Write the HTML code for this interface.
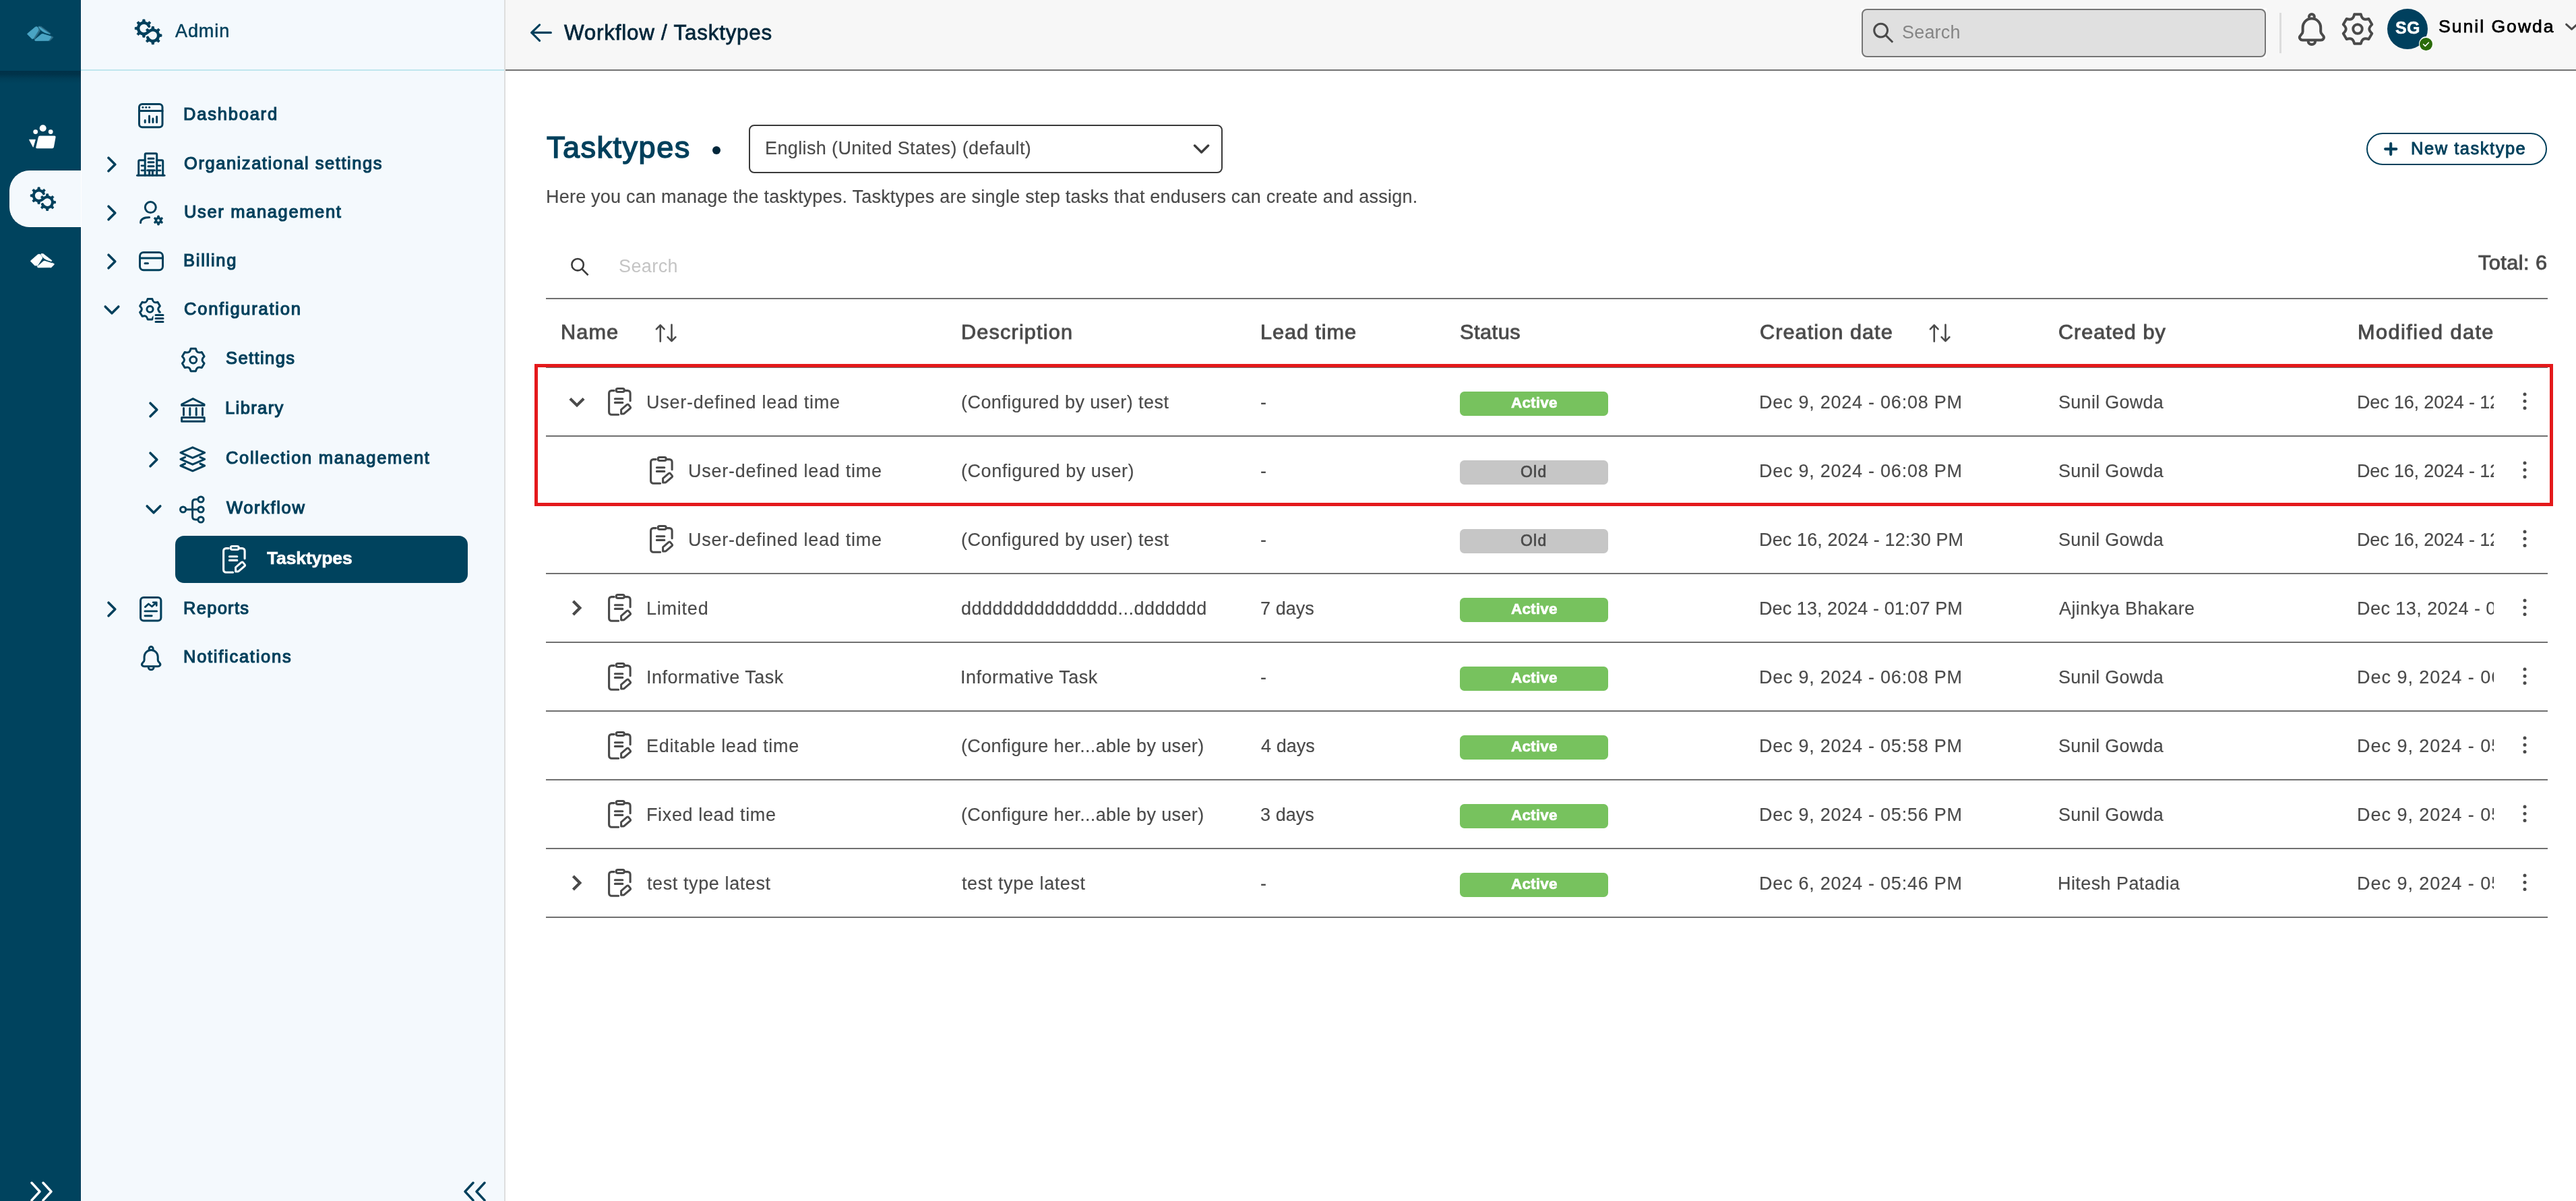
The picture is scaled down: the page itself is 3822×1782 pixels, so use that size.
<!DOCTYPE html>
<html lang="en"><head><meta charset="utf-8"><title>Workflow / Tasktypes</title>
<style>
html,body{margin:0;padding:0;width:3822px;height:1782px;overflow:hidden}
body{width:3822px;height:1782px;overflow:hidden;background:#fff;font-family:"Liberation Sans",sans-serif;color:#4a4a4a;position:relative}
div,span,svg,a,h1,p,b,i,nav,aside,header,main,section,button{position:absolute;box-sizing:border-box;margin:0;padding:0}
aside,header,main,nav,section{position:static}
.t{white-space:pre;line-height:0;font-weight:400;will-change:transform}
.i{overflow:visible}
.ln{background:#707070;height:2px}
</style></head>
<body>
<aside>
<div style="left:0px;top:0px;width:120px;height:1782px;background:#00435e;border-right:1px solid #003a5a"></div>
<div style="left:0px;top:105px;width:120px;height:19px;background:linear-gradient(to bottom,rgba(0,18,32,.36) 0%,rgba(0,18,32,.32) 28%,rgba(0,18,32,.11) 58%,rgba(0,18,32,0) 100%)"></div>
<div style="left:14px;top:253px;width:108px;height:84px;background:#f4f9fd;border-radius:30px 0 0 30px;border:1px solid #fff;border-right:none"></div>
<svg class="i" style="left:40.0px;top:38.0px" width="42" height="26" viewBox="0 0 42 26" ><path d="M15.40 1.70L18.60 5.30L19.50 7.80L11.60 19.80L9.60 19.40L17.00 7.00L16.50 3.80Z" fill="#306d87" stroke="#306d87" stroke-width="0.8" stroke-linejoin="round"/><path d="M17.60 1.10L21.00 1.20L35.20 11.70L34.40 12.60L19.60 2.60Z" fill="#306d87" stroke="#306d87" stroke-width="0.8" stroke-linejoin="round"/><path d="M35.30 15.40L38.80 16.90L38.60 18.00L33.70 22.70L32.00 22.30L36.10 17.00Z" fill="#306d87" stroke="#306d87" stroke-width="0.8" stroke-linejoin="round"/><path d="M0.60 12.00L12.50 2.10L14.90 1.80L16.50 3.80L17.00 7.00L9.60 19.00L7.60 19.70L0.60 12.80Z" fill="#4aa4c4" stroke="#4aa4c4" stroke-width="0.8" stroke-linejoin="round"/><path d="M17.30 1.70L19.60 2.60L34.20 12.60Q25.50 11.00 21.80 7.60Q18.80 4.80 17.30 1.70Z" fill="#4aa4c4" stroke="#4aa4c4" stroke-width="0.8" stroke-linejoin="round"/><path d="M11.30 21.30L21.20 12.90L23.30 12.30L34.90 15.80L36.10 17.00L32.00 22.30L12.50 22.50Z" fill="#4aa4c4" stroke="#4aa4c4" stroke-width="0.8" stroke-linejoin="round"/></svg>
<svg class="i" style="left:43.0px;top:185.0px" width="41" height="36" viewBox="0 0 41 36" ><circle cx="20.7" cy="5.2" r="5" fill="#fff"/><circle cx="9.7" cy="10.6" r="3.4" fill="#fff"/><circle cx="32.2" cy="10.6" r="3.4" fill="#fff"/><path d="M10.3 33.6L13.8 18.6Q14.3 16.6 16.3 16.6H37.6Q39.9 16.6 39.5 18.9L36.9 33.3Q36.5 35.3 34.4 35.3H11.8Q9.8 35.3 10.3 33.6Z" fill="#fff"/><path d="M0.4 22.2H9.4L6.2 33.2Z" fill="#fff" stroke="#fff" stroke-width="0.8" stroke-linejoin="round"/></svg>
<svg class="i" style="left:45.3px;top:276.5px" width="39.6" height="39.6" viewBox="0 0 39.6 39.6" ><g transform="scale(0.940)"><path d="M21.10 10.99A8.3 8.3 0 1 0 19.27 19.97L20.93 18.73A8.3 8.3 0 1 1 19.10 27.71" fill="none" stroke="#00405c" stroke-width="4.3" stroke-linecap="round" stroke-linejoin="round"/><path d="M18.77 5.90L21.64 3.74L23.76 5.86L21.60 8.73ZM11.40 4.50L11.90 0.95L14.90 0.95L15.40 4.50ZM5.20 8.73L3.04 5.86L5.16 3.74L8.03 5.90ZM3.80 16.10L0.25 15.60L0.25 12.60L3.80 12.10ZM8.03 22.30L5.16 24.46L3.04 22.34L5.20 19.47ZM15.40 23.70L14.90 27.25L11.90 27.25L11.40 23.70ZM18.60 19.23L16.44 16.36L18.56 14.24L21.43 16.40ZM24.80 15.00L25.30 11.45L28.30 11.45L28.80 15.00ZM32.17 16.40L35.04 14.24L37.16 16.36L35.00 19.23ZM36.40 22.60L39.95 23.10L39.95 26.10L36.40 26.60ZM35.00 29.97L37.16 32.84L35.04 34.96L32.17 32.80ZM28.80 34.20L28.30 37.75L25.30 37.75L24.80 34.20ZM21.43 32.80L18.56 34.96L16.44 32.84L18.60 29.97Z" fill="#00405c" stroke="#00405c" stroke-width="0.9" stroke-linejoin="round"/></g></svg>
<svg class="i" style="left:45.0px;top:376.0px" width="38" height="24" viewBox="0 0 38 24" ><path d="M0.55 10.92L11.38 1.52L13.56 1.23L15.02 3.13L15.47 6.17L8.74 17.57L6.92 18.24L0.55 11.68Z" fill="#fff" stroke="#fff" stroke-width="0.8" stroke-linejoin="round"/><path d="M15.74 1.14L17.84 2.00L31.12 11.50Q23.21 9.97 19.84 6.75Q17.11 4.08 15.74 1.14Z" fill="#fff" stroke="#fff" stroke-width="0.8" stroke-linejoin="round"/><path d="M10.28 19.76L19.29 11.78L21.20 11.21L31.76 14.53L32.85 15.67L29.12 20.71L11.38 20.90Z" fill="#fff" stroke="#fff" stroke-width="0.8" stroke-linejoin="round"/><path d="M14.01 1.14L16.93 4.56L17.75 6.93L10.56 18.33L8.74 17.95L15.47 6.17L15.02 3.13Z" fill="#fff" stroke="#fff" stroke-width="0.8" stroke-linejoin="round"/><path d="M16.02 0.57L19.11 0.67L32.03 10.64L31.30 11.50L17.84 2.00Z" fill="#fff" stroke="#fff" stroke-width="0.8" stroke-linejoin="round"/><path d="M32.12 14.15L35.31 15.58L35.13 16.62L30.67 21.09L29.12 20.71L32.85 15.67Z" fill="#fff" stroke="#fff" stroke-width="0.8" stroke-linejoin="round"/></svg>
<svg class="i" style="left:45.0px;top:1753.0px" width="33" height="29" viewBox="0 0 33 29" ><path d="M2 2L14 15L2 28M19 2L31 15L19 28" fill="none" stroke="#fff" stroke-width="3.4" stroke-linecap="round" stroke-linejoin="round" /></svg>
</aside>
<nav>
<div style="left:120px;top:0px;width:628px;height:1782px;background:#f4f9fd;border-left:1px solid #fff"></div>
<div style="left:748px;top:0px;width:2px;height:1782px;background:#dedede"></div>
<div style="left:120px;top:103px;width:628px;height:2px;background:#bfe6ee"></div>
<svg class="i" style="left:200.0px;top:27.5px" width="42" height="42" viewBox="0 0 42 42" ><g transform="scale(1.000)"><path d="M21.10 10.99A8.3 8.3 0 1 0 19.27 19.97L20.93 18.73A8.3 8.3 0 1 1 19.10 27.71" fill="none" stroke="#00405c" stroke-width="4.3" stroke-linecap="round" stroke-linejoin="round"/><path d="M18.77 5.90L21.64 3.74L23.76 5.86L21.60 8.73ZM11.40 4.50L11.90 0.95L14.90 0.95L15.40 4.50ZM5.20 8.73L3.04 5.86L5.16 3.74L8.03 5.90ZM3.80 16.10L0.25 15.60L0.25 12.60L3.80 12.10ZM8.03 22.30L5.16 24.46L3.04 22.34L5.20 19.47ZM15.40 23.70L14.90 27.25L11.90 27.25L11.40 23.70ZM18.60 19.23L16.44 16.36L18.56 14.24L21.43 16.40ZM24.80 15.00L25.30 11.45L28.30 11.45L28.80 15.00ZM32.17 16.40L35.04 14.24L37.16 16.36L35.00 19.23ZM36.40 22.60L39.95 23.10L39.95 26.10L36.40 26.60ZM35.00 29.97L37.16 32.84L35.04 34.96L32.17 32.80ZM28.80 34.20L28.30 37.75L25.30 37.75L24.80 34.20ZM21.43 32.80L18.56 34.96L16.44 32.84L18.60 29.97Z" fill="#00405c" stroke="#00405c" stroke-width="0.9" stroke-linejoin="round"/></g></svg>
<span class="t" style="left:260.1px;top:46px;font-size:27px;color:#00405c;letter-spacing:0.92px;-webkit-text-stroke:0.5px;">Admin</span>
<svg class="i" style="left:205.2px;top:153.1px" width="38" height="38" viewBox="0 0 38 38" ><rect x="1.5" y="1.5" width="34.5" height="34.2" rx="4.5" fill="none" stroke="#00405c" stroke-width="3" stroke-linecap="round" stroke-linejoin="round" /><path d="M1.5 11.4H36" fill="none" stroke="#00405c" stroke-width="3" stroke-linecap="round" stroke-linejoin="round" /><circle cx="6.9" cy="6.3" r="1.5" fill="#00405c"/><circle cx="11.8" cy="6.3" r="1.5" fill="#00405c"/><circle cx="16.6" cy="6.3" r="1.5" fill="#00405c"/><path d="M10.2 25.6V28.4M16.5 19V28.4M21.9 23V28.4M27.6 20V28.4" fill="none" stroke="#00405c" stroke-width="3" stroke-linecap="round" stroke-linejoin="round" /></svg><span class="t" style="left:272.2px;top:169px;font-size:25.5px;color:#00405c;letter-spacing:1.79px;-webkit-text-stroke:1.15px;">Dashboard</span>
<svg class="i" style="left:159.0px;top:231.7px" width="14" height="24" viewBox="0 0 14 24" ><path d="M2 2.2L11.8 12L2 21.8" fill="none" stroke="#00405c" stroke-width="3.6" stroke-linecap="round" stroke-linejoin="round" /></svg><svg class="i" style="left:201.7px;top:224.9px" width="44" height="38" viewBox="0 0 44 38" ><path d="M1.5 35.3H42" fill="none" stroke="#00405c" stroke-width="3" stroke-linecap="round" stroke-linejoin="round" /><path d="M13.2 35V4.2Q13.2 2.7 14.7 2.7H29.2Q30.7 2.7 30.7 4.2V35" fill="none" stroke="#00405c" stroke-width="3" stroke-linecap="round" stroke-linejoin="round" /><path d="M3.7 35V14.2Q3.7 12.7 5.2 12.7H13 M30.9 12.7H38.2Q39.7 12.7 39.7 14.2V35" fill="none" stroke="#00405c" stroke-width="3" stroke-linecap="round" stroke-linejoin="round" /><path d="M18 10.3H26M18 15.8H26M18 21.7H26" fill="none" stroke="#00405c" stroke-width="3" stroke-linecap="round" stroke-linejoin="round" /><path d="M16.6 27.8H27.4M19.6 28V35M24.4 28V35" fill="none" stroke="#00405c" stroke-width="3" stroke-linecap="round" stroke-linejoin="round" /><path d="M8 20.8H11M8 27.8H11M33 20.8H36M33 27.8H36" fill="none" stroke="#00405c" stroke-width="2.8" stroke-linecap="round" stroke-linejoin="round" /></svg><span class="t" style="left:273.2px;top:242px;font-size:25.5px;color:#00405c;letter-spacing:1.55px;-webkit-text-stroke:1.15px;">Organizational settings</span>
<svg class="i" style="left:159.0px;top:303.7px" width="14" height="24" viewBox="0 0 14 24" ><path d="M2 2.2L11.8 12L2 21.8" fill="none" stroke="#00405c" stroke-width="3.6" stroke-linecap="round" stroke-linejoin="round" /></svg><svg class="i" style="left:207.0px;top:298.8px" width="36" height="36" viewBox="0 0 36 36" ><circle cx="16.3" cy="8.6" r="8" fill="none" stroke="#00405c" stroke-width="3" stroke-linecap="round" stroke-linejoin="round" /><path d="M1.6 31.4C1.6 25.6 6 23.4 14.6 23.4" fill="none" stroke="#00405c" stroke-width="3" stroke-linecap="round" stroke-linejoin="round" /><path d="M29.43 23.31L29.10 21.09L26.90 21.09L26.57 23.31L24.66 24.42L22.56 23.59L21.46 25.49L23.23 26.90L23.23 29.10L21.46 30.51L22.56 32.41L24.66 31.58L26.57 32.69L26.90 34.91L29.10 34.91L29.43 32.69L31.34 31.58L33.44 32.41L34.54 30.51L32.77 29.10L32.77 26.90L34.54 25.49L33.44 23.59L31.34 24.42ZM25.70 28.00a2.3 2.3 0 1 0 4.6 0a2.3 2.3 0 1 0 -4.6 0Z" fill="#00405c" fill-rule="evenodd" stroke="#00405c" stroke-width="1" stroke-linejoin="round"/></svg><span class="t" style="left:273.2px;top:314px;font-size:25.5px;color:#00405c;letter-spacing:1.65px;-webkit-text-stroke:1.15px;">User management</span>
<svg class="i" style="left:159.0px;top:375.7px" width="14" height="24" viewBox="0 0 14 24" ><path d="M2 2.2L11.8 12L2 21.8" fill="none" stroke="#00405c" stroke-width="3.6" stroke-linecap="round" stroke-linejoin="round" /></svg><svg class="i" style="left:205.5px;top:373.3px" width="37" height="30" viewBox="0 0 37 30" ><rect x="1.5" y="1.5" width="34" height="26.3" rx="5.5" fill="none" stroke="#00405c" stroke-width="3" stroke-linecap="round" stroke-linejoin="round" /><path d="M1.5 10H35.5" fill="none" stroke="#00405c" stroke-width="3" stroke-linecap="round" stroke-linejoin="round" /><path d="M9 17.7H13.5" fill="none" stroke="#00405c" stroke-width="3" stroke-linecap="round" stroke-linejoin="round" /></svg><span class="t" style="left:272.2px;top:386px;font-size:25.5px;color:#00405c;letter-spacing:1.73px;-webkit-text-stroke:1.15px;">Billing</span>
<svg class="i" style="left:154.0px;top:452.7px" width="24" height="14" viewBox="0 0 24 14" ><path d="M2.2 2L12 11.8L21.8 2" fill="none" stroke="#00405c" stroke-width="3.6" stroke-linecap="round" stroke-linejoin="round" /></svg><svg class="i" style="left:205.0px;top:439.5px" width="40" height="40" viewBox="0 0 40 40" ><path d="M14.12 3.52L20.88 3.52C22.07 8.49 24.10 9.66 29.00 8.21L32.38 14.06C28.67 17.58 28.67 19.92 32.38 23.44L29.00 29.29C24.10 27.84 22.07 29.01 20.88 33.98L14.12 33.98C12.93 29.01 10.90 27.84 6.00 29.29L2.62 23.44C6.33 19.92 6.33 17.58 2.62 14.06L6.00 8.21C10.90 9.66 12.93 8.49 14.12 3.52Z" fill="none" stroke="#00405c" stroke-width="3" stroke-linecap="round" stroke-linejoin="round" /><circle cx="17.5" cy="18.75" r="4.60" fill="none" stroke="#00405c" stroke-width="3" stroke-linecap="round" stroke-linejoin="round" /><rect x="22.5" y="24.5" width="20" height="16" fill="#f4f9fd"/><path d="M26 27.5H37M26 32.5H37M26 37.5H37" fill="none" stroke="#00405c" stroke-width="3" stroke-linecap="round" stroke-linejoin="round" /></svg><span class="t" style="left:273.2px;top:458px;font-size:25.5px;color:#00405c;letter-spacing:1.77px;-webkit-text-stroke:1.15px;">Configuration</span>
<svg class="i" style="left:265.5px;top:514.0px" width="40" height="40" viewBox="0 0 40 40" ><path d="M17.05 3.31L24.45 3.31C25.76 8.75 27.99 10.04 33.36 8.45L37.06 14.86C32.99 18.71 32.99 21.29 37.06 25.14L33.36 31.55C27.99 29.96 25.76 31.25 24.45 36.69L17.05 36.69C15.74 31.25 13.51 29.96 8.14 31.55L4.44 25.14C8.51 21.29 8.51 18.71 4.44 14.86L8.14 8.45C13.51 10.04 15.74 8.75 17.05 3.31Z" fill="none" stroke="#00405c" stroke-width="3" stroke-linecap="round" stroke-linejoin="round" /><circle cx="20.75" cy="20" r="5.00" fill="none" stroke="#00405c" stroke-width="3" stroke-linecap="round" stroke-linejoin="round" /></svg><span class="t" style="left:334.6px;top:531px;font-size:25.5px;color:#00405c;letter-spacing:1.41px;-webkit-text-stroke:1.15px;">Settings</span>
<svg class="i" style="left:221.0px;top:596.2px" width="14" height="24" viewBox="0 0 14 24" ><path d="M2 2.2L11.8 12L2 21.8" fill="none" stroke="#00405c" stroke-width="3.6" stroke-linecap="round" stroke-linejoin="round" /></svg><svg class="i" style="left:267.9px;top:589.6px" width="37" height="37" viewBox="0 0 37 37" ><path d="M18.3 1.6L1.6 10V11.6H35V10Z" fill="none" stroke="#00405c" stroke-width="3" stroke-linecap="round" stroke-linejoin="round" /><path d="M4.5 15.5V26M13.8 15.5V26M23.2 15.5V26M32.5 15.5V26" fill="none" stroke="#00405c" stroke-width="3" stroke-linecap="round" stroke-linejoin="round" /><rect x="1.6" y="29.6" width="33.6" height="5.6" fill="none" stroke="#00405c" stroke-width="3" stroke-linecap="round" stroke-linejoin="round" /></svg><span class="t" style="left:333.6px;top:605px;font-size:25.5px;color:#00405c;letter-spacing:1.39px;-webkit-text-stroke:1.15px;">Library</span>
<svg class="i" style="left:221.0px;top:670.2px" width="14" height="24" viewBox="0 0 14 24" ><path d="M2 2.2L11.8 12L2 21.8" fill="none" stroke="#00405c" stroke-width="3.6" stroke-linecap="round" stroke-linejoin="round" /></svg><svg class="i" style="left:265.9px;top:661.8px" width="40" height="39" viewBox="0 0 40 39" ><path d="M19.8 1.8L37.6 9.6L19.8 17.4L2 9.6Z" fill="none" stroke="#00405c" stroke-width="3.1" stroke-linecap="round" stroke-linejoin="round" /><path d="M8.6 16.4L2 19.4L19.8 27.2L37.6 19.4L31 16.4" fill="none" stroke="#00405c" stroke-width="3.1" stroke-linecap="round" stroke-linejoin="round" /><path d="M8.6 26L2 29L19.8 36.8L37.6 29L31 26" fill="none" stroke="#00405c" stroke-width="3.1" stroke-linecap="round" stroke-linejoin="round" /></svg><span class="t" style="left:334.6px;top:679px;font-size:25.5px;color:#00405c;letter-spacing:1.7px;-webkit-text-stroke:1.15px;">Collection management</span>
<svg class="i" style="left:216.0px;top:749.2px" width="24" height="14" viewBox="0 0 24 14" ><path d="M2.2 2L12 11.8L21.8 2" fill="none" stroke="#00405c" stroke-width="3.6" stroke-linecap="round" stroke-linejoin="round" /></svg><svg class="i" style="left:265.0px;top:734.0px" width="40" height="44" viewBox="0 0 40 44" ><circle cx="6.6" cy="22" r="4.1" fill="none" stroke="#00405c" stroke-width="3" stroke-linecap="round" stroke-linejoin="round" /><circle cx="33" cy="7" r="4.1" fill="none" stroke="#00405c" stroke-width="3" stroke-linecap="round" stroke-linejoin="round" /><circle cx="33" cy="22" r="4.1" fill="none" stroke="#00405c" stroke-width="3" stroke-linecap="round" stroke-linejoin="round" /><circle cx="33" cy="37" r="4.1" fill="none" stroke="#00405c" stroke-width="3" stroke-linecap="round" stroke-linejoin="round" /><path d="M10.8 22H28.8M28.8 7H25Q20.6 7 20.6 11.4V32.6Q20.6 37 25 37H28.8" fill="none" stroke="#00405c" stroke-width="3" stroke-linecap="round" stroke-linejoin="round" /></svg><span class="t" style="left:335.6px;top:753px;font-size:25.5px;color:#00405c;letter-spacing:1.64px;-webkit-text-stroke:1.15px;">Workflow</span>
<div style="left:260px;top:795px;width:434px;height:70px;background:#00435e;border-radius:13px"></div>
<svg class="i" style="left:329.8px;top:809.0px" width="36.0" height="43.0" viewBox="0 0 36.0 43.0" ><g transform="scale(1.0)"><path d="M25.8 4.6H29.3a3.8 3.8 0 0 1 3.8 3.8V19.8M9.2 4.6H5.4a3.8 3.8 0 0 0-3.8 3.8V36.4a3.8 3.8 0 0 0 3.8 3.8H15.6" fill="none" stroke="#fff" stroke-width="3.1" stroke-linecap="round" stroke-linejoin="round" /><rect x="12.2" y="1.55" width="12.1" height="4.9" rx="2.45" fill="none" stroke="#fff" stroke-width="3.1" stroke-linecap="round" stroke-linejoin="round" /><path d="M10.4 16.7H21.8M10.4 22.4H21.8" fill="none" stroke="#fff" stroke-width="3.1" stroke-linecap="round" stroke-linejoin="round" /><path d="M19.6 32.8L28.2 25.4Q29.5 24.4 30.6 25.6L33.1 28.6Q34.1 29.9 32.9 31L24.3 38.4Q23.7 38.9 22.9 38.9H19.6Z" fill="none" stroke="#fff" stroke-width="3" stroke-linecap="round" stroke-linejoin="round" /></g></svg>
<span class="t" style="left:396.4px;top:828px;font-size:26.5px;color:#fff;font-weight:700;letter-spacing:-0.13px;-webkit-text-stroke:0.6px;">Tasktypes</span>
<svg class="i" style="left:159.0px;top:891.7px" width="14" height="24" viewBox="0 0 14 24" ><path d="M2 2.2L11.8 12L2 21.8" fill="none" stroke="#00405c" stroke-width="3.6" stroke-linecap="round" stroke-linejoin="round" /></svg><svg class="i" style="left:207.2px;top:885.0px" width="34" height="38" viewBox="0 0 34 38" ><rect x="1.55" y="1.55" width="30.3" height="34.4" rx="4.5" fill="none" stroke="#00405c" stroke-width="3.1" stroke-linecap="round" stroke-linejoin="round" /><path d="M8.4 15.6L13.4 11L18.4 15L24.2 9.8" fill="none" stroke="#00405c" stroke-width="2.8" stroke-linecap="round" stroke-linejoin="round" /><path d="M20.2 8.8H25.2V13.6" fill="none" stroke="#00405c" stroke-width="2.8" stroke-linecap="round" stroke-linejoin="round" /><path d="M8 21.9H25.6M8 28.75H18.2" fill="none" stroke="#00405c" stroke-width="2.9" stroke-linecap="round" stroke-linejoin="round" /></svg><span class="t" style="left:272.2px;top:902px;font-size:25.5px;color:#00405c;letter-spacing:1.29px;-webkit-text-stroke:1.15px;">Reports</span>
<svg class="i" style="left:208.9px;top:958.0px" width="32" height="40" viewBox="0 0 32 40" ><g transform="translate(0,0.7)"><path d="M12.13 3.94A3.03 3.03 0 0 1 18.19 3.94M5.08 20.47V15.92A10.08 10.08 0 0 1 25.24 15.92V20.47Q25.24 22.44 27.29 24.26Q30.02 26.98 28.05 28.96Q27.29 30.02 25.47 30.02H4.85Q3.03 30.02 2.27 28.96Q0.30 26.98 3.03 24.26Q5.08 22.44 5.08 20.47ZM11.14 31.08A4.02 4.02 0 0 0 19.18 31.08" fill="none" stroke="#00405c" stroke-width="3" stroke-linecap="round" stroke-linejoin="round" /></g></svg><span class="t" style="left:272.2px;top:974px;font-size:25.5px;color:#00405c;letter-spacing:1.73px;-webkit-text-stroke:1.15px;">Notifications</span>
<svg class="i" style="left:688.0px;top:1753.0px" width="33" height="29" viewBox="0 0 33 29" ><path d="M14 2L2 15L14 28M31 2L19 15L31 28" fill="none" stroke="#00405c" stroke-width="3.4" stroke-linecap="round" stroke-linejoin="round" /></svg>
</nav>
<header>
<div style="left:750px;top:0px;width:3072px;height:102px;background:#f7f7f7"></div>
<div style="left:750px;top:103px;width:3072px;height:2px;background:#717171"></div>
<svg class="i" style="left:787.0px;top:36.0px" width="33" height="26" viewBox="0 0 33 26" ><path d="M1.6 12.4H30.4M13.6 0.9L1.6 12.4L13.6 24.4" fill="none" stroke="#00405c" stroke-width="3.1" stroke-linecap="round" stroke-linejoin="round" /></svg>
<span class="t" style="left:836.6px;top:49px;font-size:31.3px;color:#00263a;letter-spacing:0.81px;-webkit-text-stroke:0.8px;">Workflow / Tasktypes</span>
<div style="left:2761px;top:12px;width:602px;height:74px;background:#fdfdfd"></div>
<div style="left:2762px;top:13px;width:600px;height:72px;background:#e0e0e0;border:2px solid #757575;border-radius:8px"></div>
<svg class="i" style="left:2778.0px;top:33.0px" width="32" height="32" viewBox="0 0 32 32" ><g transform="scale(1.000)"><circle cx="12.6" cy="12.1" r="9.9" fill="none" stroke="#4a4a4a" stroke-width="3.00"/><path d="M19.6 19.1L30.2 29.8" fill="none" stroke="#4a4a4a" stroke-width="3.00"/></g></svg>
<span class="t" style="left:2821.9px;top:48px;font-size:27px;color:#858585;letter-spacing:0.19px;">Search</span>
<div style="left:3382px;top:19px;width:3px;height:60px;background:#dddddd"></div>
<svg class="i" style="left:3410.0px;top:18.7px" width="42" height="52" viewBox="0 0 42 52" ><g transform="translate(-0.1,0.8)"><path d="M16.00 5.20A4.00 4.00 0 0 1 24.00 5.20M6.70 27.00V21.00A13.30 13.30 0 0 1 33.30 21.00V27.00Q33.30 29.60 36.00 32.00Q39.60 35.60 37.00 38.20Q36.00 39.60 33.60 39.60H6.40Q4.00 39.60 3.00 38.20Q0.40 35.60 4.00 32.00Q6.70 29.60 6.70 27.00ZM14.70 41.00A5.30 5.30 0 0 0 25.30 41.00" fill="none" stroke="#4a4a4a" stroke-width="4" stroke-linecap="round" stroke-linejoin="round" /></g></svg>
<svg class="i" style="left:3474.0px;top:18.7px" width="48" height="49" viewBox="0 0 48 49" ><path d="M19.17 2.23L28.83 2.23C30.53 9.33 33.44 11.01 40.44 8.93L45.27 17.29C39.97 22.32 39.97 25.68 45.27 30.71L40.44 39.07C33.44 36.99 30.53 38.67 28.83 45.77L19.17 45.77C17.47 38.67 14.56 36.99 7.56 39.07L2.73 30.71C8.03 25.68 8.03 22.32 2.73 17.29L7.56 8.93C14.56 11.01 17.47 9.33 19.17 2.23Z" fill="none" stroke="#4a4a4a" stroke-width="3.9" stroke-linecap="round" stroke-linejoin="round" /><circle cx="24" cy="24.0" r="6.75" fill="none" stroke="#4a4a4a" stroke-width="3.9" stroke-linecap="round" stroke-linejoin="round" /></svg>
<div style="left:3542px;top:12.7px;width:60px;height:60px;background:#00405e;border-radius:50%"></div>
<span class="t" style="left:3554.2px;top:41px;font-size:25px;color:#fff;font-weight:700;letter-spacing:0.33px;-webkit-text-stroke:0.5px;">SG</span>
<div style="left:3588.7px;top:54.1px;width:22px;height:22px;background:#fdfdfd;border-radius:50%"></div>
<div style="left:3590.1px;top:55.5px;width:19.2px;height:19.2px;background:#2b6b0a;border-radius:50%"></div>
<svg class="i" style="left:3590.2px;top:55.6px" width="19" height="19" viewBox="0 0 19 19" ><path d="M5.6 9.7l2.7 2.7 5-5.2" fill="none" stroke="#fff" stroke-width="1.6" stroke-linecap="round" stroke-linejoin="round"/></svg>
<span class="t" style="left:3618.4px;top:39px;font-size:26.5px;color:#000;letter-spacing:2.03px;-webkit-text-stroke:0.75px;">Sunil Gowda</span>
<svg class="i" style="left:3806px;top:34.2px" width="16" height="14" viewBox="0 0 16 14" ><path d="M1.6 2.2L9.6 9.4L17.6 2.2" fill="none" stroke="#4a4a4a" stroke-width="3" stroke-linecap="round" stroke-linejoin="round"/></svg>
</header>
<main>
<h1 class="t" style="left:811.0px;top:219px;font-size:45px;color:#00405c;letter-spacing:1.51px;-webkit-text-stroke:1.5px;">Tasktypes</h1>
<div style="left:1056.5px;top:216.5px;width:12.5px;height:12.5px;background:#00263a;border-radius:50%"></div>
<div style="left:1111px;top:185px;width:703px;height:72px;border:2px solid #393939;border-radius:8px;background:#fff"></div>
<span class="t" style="left:1134.7px;top:220px;font-size:27px;letter-spacing:0.38px;-webkit-text-stroke:0.15px;">English (United States) (default)</span>
<svg class="i" style="left:1769.5px;top:212.5px" width="27" height="18" viewBox="0 0 27 18" ><path d="M2.6 3l10 10 10-10" fill="none" stroke="#3c3c3c" stroke-width="3.5" stroke-linecap="round" stroke-linejoin="round"/></svg>
<p class="t" style="left:809.7px;top:292px;font-size:27px;letter-spacing:0.22px;-webkit-text-stroke:0.15px;">Here you can manage the tasktypes. Tasktypes are single step tasks that endusers can create and assign.</p>
<div style="left:3511px;top:197px;width:268px;height:48px;border:2px solid #00405c;border-radius:24px;background:#fff"></div>
<svg class="i" style="left:3536.9px;top:211px" width="21" height="21" viewBox="0 0 21 21" ><path d="M10.2 2.1v16M2.1 10.1h16.2" fill="none" stroke="#00405c" stroke-width="4.1" stroke-linecap="round"/></svg>
<span class="t" style="left:3576.8px;top:220px;font-size:25.5px;color:#00405c;letter-spacing:1.52px;-webkit-text-stroke:0.9px;">New tasktype</span>
<svg class="i" style="left:845.8px;top:381.9px" width="28.4" height="28.4" viewBox="0 0 28.4 28.4" ><g transform="scale(0.880)"><circle cx="12.6" cy="12.1" r="9.9" fill="none" stroke="#3c3c3c" stroke-width="2.95"/><path d="M19.6 19.1L30.2 29.8" fill="none" stroke="#3c3c3c" stroke-width="2.95"/></g></svg>
<span class="t" style="left:917.8px;top:395px;font-size:27px;color:#c4c4c4;letter-spacing:0.41px;">Search</span>
<span class="t" style="left:3677.4px;top:390px;font-size:30.7px;letter-spacing:0.43px;-webkit-text-stroke:0.9px;transform:scaleY(0.95);transform-origin:0 10px;">Total: 6</span>
<div class="ln" style="left:810px;top:442px;width:2970px;height:2px;"></div>
<div class="ln" style="left:810px;top:544px;width:2970px;height:2px;"></div>
<div class="ln" style="left:810px;top:646px;width:2970px;height:2px;"></div>
<div class="ln" style="left:810px;top:748px;width:2970px;height:2px;"></div>
<div class="ln" style="left:810px;top:850px;width:2970px;height:2px;"></div>
<div class="ln" style="left:810px;top:952px;width:2970px;height:2px;"></div>
<div class="ln" style="left:810px;top:1054px;width:2970px;height:2px;"></div>
<div class="ln" style="left:810px;top:1156px;width:2970px;height:2px;"></div>
<div class="ln" style="left:810px;top:1258px;width:2970px;height:2px;"></div>
<div class="ln" style="left:810px;top:1360px;width:2970px;height:2px;"></div>
<span class="t" style="left:832.2px;top:493px;font-size:30.7px;letter-spacing:1.1px;-webkit-text-stroke:0.9px;transform:scaleY(0.955);transform-origin:0 10px;">Name</span>
<svg class="i" style="left:973.0px;top:481.0px" width="31" height="27" viewBox="0 0 31 27" ><path d="M6.75 1.6V25.6M0.9 7.3L6.75 1.4L12.6 7.3" fill="none" stroke="#4a4a4a" stroke-width="2.6" stroke-linecap="round" stroke-linejoin="round" /><path d="M23.5 0.8V25M17.6 19.2L23.5 25.1L29.4 19.2" fill="none" stroke="#4a4a4a" stroke-width="2.6" stroke-linecap="round" stroke-linejoin="round" /></svg>
<span class="t" style="left:1426.2px;top:493px;font-size:30.7px;letter-spacing:1.15px;-webkit-text-stroke:0.9px;transform:scaleY(0.955);transform-origin:0 10px;">Description</span>
<span class="t" style="left:1870.0px;top:493px;font-size:30.7px;letter-spacing:0.91px;-webkit-text-stroke:0.9px;transform:scaleY(0.955);transform-origin:0 10px;">Lead time</span>
<span class="t" style="left:2166.1px;top:493px;font-size:30.7px;letter-spacing:0.51px;-webkit-text-stroke:0.9px;transform:scaleY(0.955);transform-origin:0 10px;">Status</span>
<span class="t" style="left:2610.9px;top:493px;font-size:30.7px;letter-spacing:1.04px;-webkit-text-stroke:0.9px;transform:scaleY(0.955);transform-origin:0 10px;">Creation date</span>
<svg class="i" style="left:2863.2px;top:481.0px" width="31" height="27" viewBox="0 0 31 27" ><path d="M6.75 1.6V25.6M0.9 7.3L6.75 1.4L12.6 7.3" fill="none" stroke="#4a4a4a" stroke-width="2.6" stroke-linecap="round" stroke-linejoin="round" /><path d="M23.5 0.8V25M17.6 19.2L23.5 25.1L29.4 19.2" fill="none" stroke="#4a4a4a" stroke-width="2.6" stroke-linecap="round" stroke-linejoin="round" /></svg>
<span class="t" style="left:3054.2px;top:493px;font-size:30.7px;letter-spacing:0.96px;-webkit-text-stroke:0.9px;transform:scaleY(0.955);transform-origin:0 10px;">Created by</span>
<span class="t" style="left:3497.8px;top:493px;font-size:30.7px;letter-spacing:1.43px;-webkit-text-stroke:0.9px;transform:scaleY(0.955);transform-origin:0 10px;">Modified date</span>
<section><svg class="i" style="left:844.1px;top:588.8px" width="24" height="16" viewBox="0 0 24 16" ><path d="M1.9 2.4L12 12.4L22.1 2.4" fill="none" stroke="#4a4a4a" stroke-width="4.2" stroke-linecap="butt" stroke-linejoin="miter"/></svg><svg class="i" style="left:902.2px;top:575.3px" width="36.0" height="43.0" viewBox="0 0 36.0 43.0" ><g transform="scale(1.0)"><path d="M25.8 4.6H29.3a3.8 3.8 0 0 1 3.8 3.8V19.8M9.2 4.6H5.4a3.8 3.8 0 0 0-3.8 3.8V36.4a3.8 3.8 0 0 0 3.8 3.8H15.6" fill="none" stroke="#4a4a4a" stroke-width="3.1" stroke-linecap="round" stroke-linejoin="round" /><rect x="12.2" y="1.55" width="12.1" height="4.9" rx="2.45" fill="none" stroke="#4a4a4a" stroke-width="3.1" stroke-linecap="round" stroke-linejoin="round" /><path d="M10.4 16.7H21.8M10.4 22.4H21.8" fill="none" stroke="#4a4a4a" stroke-width="3.1" stroke-linecap="round" stroke-linejoin="round" /><path d="M19.6 32.8L28.2 25.4Q29.5 24.4 30.6 25.6L33.1 28.6Q34.1 29.9 32.9 31L24.3 38.4Q23.7 38.9 22.9 38.9H19.6Z" fill="none" stroke="#4a4a4a" stroke-width="3" stroke-linecap="round" stroke-linejoin="round" /></g></svg><span class="t" style="left:959.2px;top:597px;font-size:27px;letter-spacing:0.73px;-webkit-text-stroke:0.15px;">User-defined lead time</span><span class="t" style="left:1425.9px;top:597px;font-size:27px;letter-spacing:0.45px;-webkit-text-stroke:0.15px;">(Configured by user) test</span><span class="t" style="left:1869.7px;top:597px;font-size:27px;-webkit-text-stroke:0.15px;">-</span><div style="left:2166px;top:581px;width:220px;height:36px;background:#77c25e;border-radius:6.5px"></div><span class="t" style="left:2241.8px;top:598px;font-size:22.5px;color:#fff;font-weight:700;letter-spacing:0.18px;-webkit-text-stroke:0.7px;">Active</span><span class="t" style="left:2609.8px;top:597px;font-size:27px;letter-spacing:0.75px;-webkit-text-stroke:0.15px;">Dec 9, 2024 - 06:08 PM</span><span class="t" style="left:3053.9px;top:597px;font-size:27px;letter-spacing:0.28px;-webkit-text-stroke:0.15px;">Sunil Gowda</span><div style="left:3490px;top:566px;width:210px;height:60px;overflow:hidden"><span class="t" style="left:7.1px;top:31px;font-size:27px;letter-spacing:-0.16px;-webkit-text-stroke:0.15px;">Dec 16, 2024 - 12:30 PM</span></div><svg class="i" style="left:3743.0px;top:582.2px" width="6" height="27" viewBox="0 0 6 27" ><circle cx="3" cy="3" r="2.5" fill="#4a4a4a"/><circle cx="3" cy="13.3" r="2.5" fill="#4a4a4a"/><circle cx="3" cy="23.6" r="2.5" fill="#4a4a4a"/></svg></section>
<section><svg class="i" style="left:964.1px;top:677.3px" width="36.0" height="43.0" viewBox="0 0 36.0 43.0" ><g transform="scale(1.0)"><path d="M25.8 4.6H29.3a3.8 3.8 0 0 1 3.8 3.8V19.8M9.2 4.6H5.4a3.8 3.8 0 0 0-3.8 3.8V36.4a3.8 3.8 0 0 0 3.8 3.8H15.6" fill="none" stroke="#4a4a4a" stroke-width="3.1" stroke-linecap="round" stroke-linejoin="round" /><rect x="12.2" y="1.55" width="12.1" height="4.9" rx="2.45" fill="none" stroke="#4a4a4a" stroke-width="3.1" stroke-linecap="round" stroke-linejoin="round" /><path d="M10.4 16.7H21.8M10.4 22.4H21.8" fill="none" stroke="#4a4a4a" stroke-width="3.1" stroke-linecap="round" stroke-linejoin="round" /><path d="M19.6 32.8L28.2 25.4Q29.5 24.4 30.6 25.6L33.1 28.6Q34.1 29.9 32.9 31L24.3 38.4Q23.7 38.9 22.9 38.9H19.6Z" fill="none" stroke="#4a4a4a" stroke-width="3" stroke-linecap="round" stroke-linejoin="round" /></g></svg><span class="t" style="left:1021.3px;top:699px;font-size:27px;letter-spacing:0.73px;-webkit-text-stroke:0.15px;">User-defined lead time</span><span class="t" style="left:1425.9px;top:699px;font-size:27px;letter-spacing:0.55px;-webkit-text-stroke:0.15px;">(Configured by user)</span><span class="t" style="left:1869.7px;top:699px;font-size:27px;-webkit-text-stroke:0.15px;">-</span><div style="left:2166px;top:683px;width:220px;height:36px;background:#c6c6c6;border-radius:6.5px"></div><span class="t" style="left:2256.4px;top:700px;font-size:23px;letter-spacing:1.2px;-webkit-text-stroke:0.7px;">Old</span><span class="t" style="left:2609.8px;top:699px;font-size:27px;letter-spacing:0.75px;-webkit-text-stroke:0.15px;">Dec 9, 2024 - 06:08 PM</span><span class="t" style="left:3053.9px;top:699px;font-size:27px;letter-spacing:0.28px;-webkit-text-stroke:0.15px;">Sunil Gowda</span><div style="left:3490px;top:668px;width:210px;height:60px;overflow:hidden"><span class="t" style="left:7.1px;top:31px;font-size:27px;letter-spacing:-0.16px;-webkit-text-stroke:0.15px;">Dec 16, 2024 - 12:30 PM</span></div><svg class="i" style="left:3743.0px;top:684.2px" width="6" height="27" viewBox="0 0 6 27" ><circle cx="3" cy="3" r="2.5" fill="#4a4a4a"/><circle cx="3" cy="13.3" r="2.5" fill="#4a4a4a"/><circle cx="3" cy="23.6" r="2.5" fill="#4a4a4a"/></svg></section>
<section><svg class="i" style="left:964.1px;top:779.3px" width="36.0" height="43.0" viewBox="0 0 36.0 43.0" ><g transform="scale(1.0)"><path d="M25.8 4.6H29.3a3.8 3.8 0 0 1 3.8 3.8V19.8M9.2 4.6H5.4a3.8 3.8 0 0 0-3.8 3.8V36.4a3.8 3.8 0 0 0 3.8 3.8H15.6" fill="none" stroke="#4a4a4a" stroke-width="3.1" stroke-linecap="round" stroke-linejoin="round" /><rect x="12.2" y="1.55" width="12.1" height="4.9" rx="2.45" fill="none" stroke="#4a4a4a" stroke-width="3.1" stroke-linecap="round" stroke-linejoin="round" /><path d="M10.4 16.7H21.8M10.4 22.4H21.8" fill="none" stroke="#4a4a4a" stroke-width="3.1" stroke-linecap="round" stroke-linejoin="round" /><path d="M19.6 32.8L28.2 25.4Q29.5 24.4 30.6 25.6L33.1 28.6Q34.1 29.9 32.9 31L24.3 38.4Q23.7 38.9 22.9 38.9H19.6Z" fill="none" stroke="#4a4a4a" stroke-width="3" stroke-linecap="round" stroke-linejoin="round" /></g></svg><span class="t" style="left:1021.3px;top:801px;font-size:27px;letter-spacing:0.73px;-webkit-text-stroke:0.15px;">User-defined lead time</span><span class="t" style="left:1425.9px;top:801px;font-size:27px;letter-spacing:0.45px;-webkit-text-stroke:0.15px;">(Configured by user) test</span><span class="t" style="left:1869.7px;top:801px;font-size:27px;-webkit-text-stroke:0.15px;">-</span><div style="left:2166px;top:785px;width:220px;height:36px;background:#c6c6c6;border-radius:6.5px"></div><span class="t" style="left:2256.4px;top:802px;font-size:23px;letter-spacing:1.2px;-webkit-text-stroke:0.7px;">Old</span><span class="t" style="left:2609.8px;top:801px;font-size:27px;letter-spacing:0.13px;-webkit-text-stroke:0.15px;">Dec 16, 2024 - 12:30 PM</span><span class="t" style="left:3053.9px;top:801px;font-size:27px;letter-spacing:0.28px;-webkit-text-stroke:0.15px;">Sunil Gowda</span><div style="left:3490px;top:770px;width:210px;height:60px;overflow:hidden"><span class="t" style="left:7.1px;top:31px;font-size:27px;letter-spacing:-0.16px;-webkit-text-stroke:0.15px;">Dec 16, 2024 - 12:30 PM</span></div><svg class="i" style="left:3743.0px;top:786.2px" width="6" height="27" viewBox="0 0 6 27" ><circle cx="3" cy="3" r="2.5" fill="#4a4a4a"/><circle cx="3" cy="13.3" r="2.5" fill="#4a4a4a"/><circle cx="3" cy="23.6" r="2.5" fill="#4a4a4a"/></svg></section>
<section><svg class="i" style="left:848.2px;top:890.3px" width="16" height="24" viewBox="0 0 16 24" ><path d="M2.4 1.9L12.4 12L2.4 22.1" fill="none" stroke="#4a4a4a" stroke-width="4.2" stroke-linecap="butt" stroke-linejoin="miter"/></svg><svg class="i" style="left:902.2px;top:881.3px" width="36.0" height="43.0" viewBox="0 0 36.0 43.0" ><g transform="scale(1.0)"><path d="M25.8 4.6H29.3a3.8 3.8 0 0 1 3.8 3.8V19.8M9.2 4.6H5.4a3.8 3.8 0 0 0-3.8 3.8V36.4a3.8 3.8 0 0 0 3.8 3.8H15.6" fill="none" stroke="#4a4a4a" stroke-width="3.1" stroke-linecap="round" stroke-linejoin="round" /><rect x="12.2" y="1.55" width="12.1" height="4.9" rx="2.45" fill="none" stroke="#4a4a4a" stroke-width="3.1" stroke-linecap="round" stroke-linejoin="round" /><path d="M10.4 16.7H21.8M10.4 22.4H21.8" fill="none" stroke="#4a4a4a" stroke-width="3.1" stroke-linecap="round" stroke-linejoin="round" /><path d="M19.6 32.8L28.2 25.4Q29.5 24.4 30.6 25.6L33.1 28.6Q34.1 29.9 32.9 31L24.3 38.4Q23.7 38.9 22.9 38.9H19.6Z" fill="none" stroke="#4a4a4a" stroke-width="3" stroke-linecap="round" stroke-linejoin="round" /></g></svg><span class="t" style="left:959.2px;top:903px;font-size:27px;letter-spacing:0.77px;-webkit-text-stroke:0.15px;">Limited</span><span class="t" style="left:1425.9px;top:903px;font-size:27px;letter-spacing:0.48px;-webkit-text-stroke:0.15px;">ddddddddddddddd...ddddddd</span><span class="t" style="left:1870.4px;top:903px;font-size:27px;letter-spacing:0.06px;-webkit-text-stroke:0.15px;">7 days</span><div style="left:2166px;top:887px;width:220px;height:36px;background:#77c25e;border-radius:6.5px"></div><span class="t" style="left:2241.8px;top:904px;font-size:22.5px;color:#fff;font-weight:700;letter-spacing:0.18px;-webkit-text-stroke:0.7px;">Active</span><span class="t" style="left:2609.8px;top:903px;font-size:27px;letter-spacing:0.07px;-webkit-text-stroke:0.15px;">Dec 13, 2024 - 01:07 PM</span><span class="t" style="left:3054.9px;top:903px;font-size:27px;letter-spacing:0.43px;-webkit-text-stroke:0.15px;">Ajinkya Bhakare</span><div style="left:3490px;top:872px;width:210px;height:60px;overflow:hidden"><span class="t" style="left:7.1px;top:31px;font-size:27px;letter-spacing:0.45px;-webkit-text-stroke:0.15px;">Dec 13, 2024 - 01:07 PM</span></div><svg class="i" style="left:3743.0px;top:888.2px" width="6" height="27" viewBox="0 0 6 27" ><circle cx="3" cy="3" r="2.5" fill="#4a4a4a"/><circle cx="3" cy="13.3" r="2.5" fill="#4a4a4a"/><circle cx="3" cy="23.6" r="2.5" fill="#4a4a4a"/></svg></section>
<section><svg class="i" style="left:902.2px;top:983.3px" width="36.0" height="43.0" viewBox="0 0 36.0 43.0" ><g transform="scale(1.0)"><path d="M25.8 4.6H29.3a3.8 3.8 0 0 1 3.8 3.8V19.8M9.2 4.6H5.4a3.8 3.8 0 0 0-3.8 3.8V36.4a3.8 3.8 0 0 0 3.8 3.8H15.6" fill="none" stroke="#4a4a4a" stroke-width="3.1" stroke-linecap="round" stroke-linejoin="round" /><rect x="12.2" y="1.55" width="12.1" height="4.9" rx="2.45" fill="none" stroke="#4a4a4a" stroke-width="3.1" stroke-linecap="round" stroke-linejoin="round" /><path d="M10.4 16.7H21.8M10.4 22.4H21.8" fill="none" stroke="#4a4a4a" stroke-width="3.1" stroke-linecap="round" stroke-linejoin="round" /><path d="M19.6 32.8L28.2 25.4Q29.5 24.4 30.6 25.6L33.1 28.6Q34.1 29.9 32.9 31L24.3 38.4Q23.7 38.9 22.9 38.9H19.6Z" fill="none" stroke="#4a4a4a" stroke-width="3" stroke-linecap="round" stroke-linejoin="round" /></g></svg><span class="t" style="left:959.2px;top:1005px;font-size:27px;letter-spacing:0.48px;-webkit-text-stroke:0.15px;">Informative Task</span><span class="t" style="left:1424.9px;top:1005px;font-size:27px;letter-spacing:0.48px;-webkit-text-stroke:0.15px;">Informative Task</span><span class="t" style="left:1869.7px;top:1005px;font-size:27px;-webkit-text-stroke:0.15px;">-</span><div style="left:2166px;top:989px;width:220px;height:36px;background:#77c25e;border-radius:6.5px"></div><span class="t" style="left:2241.8px;top:1006px;font-size:22.5px;color:#fff;font-weight:700;letter-spacing:0.18px;-webkit-text-stroke:0.7px;">Active</span><span class="t" style="left:2609.8px;top:1005px;font-size:27px;letter-spacing:0.75px;-webkit-text-stroke:0.15px;">Dec 9, 2024 - 06:08 PM</span><span class="t" style="left:3053.9px;top:1005px;font-size:27px;letter-spacing:0.28px;-webkit-text-stroke:0.15px;">Sunil Gowda</span><div style="left:3490px;top:974px;width:210px;height:60px;overflow:hidden"><span class="t" style="left:7.1px;top:31px;font-size:27px;letter-spacing:0.97px;-webkit-text-stroke:0.15px;">Dec 9, 2024 - 06:08 PM</span></div><svg class="i" style="left:3743.0px;top:990.2px" width="6" height="27" viewBox="0 0 6 27" ><circle cx="3" cy="3" r="2.5" fill="#4a4a4a"/><circle cx="3" cy="13.3" r="2.5" fill="#4a4a4a"/><circle cx="3" cy="23.6" r="2.5" fill="#4a4a4a"/></svg></section>
<section><svg class="i" style="left:902.2px;top:1085.3px" width="36.0" height="43.0" viewBox="0 0 36.0 43.0" ><g transform="scale(1.0)"><path d="M25.8 4.6H29.3a3.8 3.8 0 0 1 3.8 3.8V19.8M9.2 4.6H5.4a3.8 3.8 0 0 0-3.8 3.8V36.4a3.8 3.8 0 0 0 3.8 3.8H15.6" fill="none" stroke="#4a4a4a" stroke-width="3.1" stroke-linecap="round" stroke-linejoin="round" /><rect x="12.2" y="1.55" width="12.1" height="4.9" rx="2.45" fill="none" stroke="#4a4a4a" stroke-width="3.1" stroke-linecap="round" stroke-linejoin="round" /><path d="M10.4 16.7H21.8M10.4 22.4H21.8" fill="none" stroke="#4a4a4a" stroke-width="3.1" stroke-linecap="round" stroke-linejoin="round" /><path d="M19.6 32.8L28.2 25.4Q29.5 24.4 30.6 25.6L33.1 28.6Q34.1 29.9 32.9 31L24.3 38.4Q23.7 38.9 22.9 38.9H19.6Z" fill="none" stroke="#4a4a4a" stroke-width="3" stroke-linecap="round" stroke-linejoin="round" /></g></svg><span class="t" style="left:959.2px;top:1107px;font-size:27px;letter-spacing:0.68px;-webkit-text-stroke:0.15px;">Editable lead time</span><span class="t" style="left:1425.9px;top:1107px;font-size:27px;letter-spacing:0.36px;-webkit-text-stroke:0.15px;">(Configure her...able by user)</span><span class="t" style="left:1871.4px;top:1107px;font-size:27px;letter-spacing:0.06px;-webkit-text-stroke:0.15px;">4 days</span><div style="left:2166px;top:1091px;width:220px;height:36px;background:#77c25e;border-radius:6.5px"></div><span class="t" style="left:2241.8px;top:1108px;font-size:22.5px;color:#fff;font-weight:700;letter-spacing:0.18px;-webkit-text-stroke:0.7px;">Active</span><span class="t" style="left:2609.8px;top:1107px;font-size:27px;letter-spacing:0.75px;-webkit-text-stroke:0.15px;">Dec 9, 2024 - 05:58 PM</span><span class="t" style="left:3053.9px;top:1107px;font-size:27px;letter-spacing:0.28px;-webkit-text-stroke:0.15px;">Sunil Gowda</span><div style="left:3490px;top:1076px;width:210px;height:60px;overflow:hidden"><span class="t" style="left:7.1px;top:31px;font-size:27px;letter-spacing:0.97px;-webkit-text-stroke:0.15px;">Dec 9, 2024 - 05:58 PM</span></div><svg class="i" style="left:3743.0px;top:1092.2px" width="6" height="27" viewBox="0 0 6 27" ><circle cx="3" cy="3" r="2.5" fill="#4a4a4a"/><circle cx="3" cy="13.3" r="2.5" fill="#4a4a4a"/><circle cx="3" cy="23.6" r="2.5" fill="#4a4a4a"/></svg></section>
<section><svg class="i" style="left:902.2px;top:1187.3px" width="36.0" height="43.0" viewBox="0 0 36.0 43.0" ><g transform="scale(1.0)"><path d="M25.8 4.6H29.3a3.8 3.8 0 0 1 3.8 3.8V19.8M9.2 4.6H5.4a3.8 3.8 0 0 0-3.8 3.8V36.4a3.8 3.8 0 0 0 3.8 3.8H15.6" fill="none" stroke="#4a4a4a" stroke-width="3.1" stroke-linecap="round" stroke-linejoin="round" /><rect x="12.2" y="1.55" width="12.1" height="4.9" rx="2.45" fill="none" stroke="#4a4a4a" stroke-width="3.1" stroke-linecap="round" stroke-linejoin="round" /><path d="M10.4 16.7H21.8M10.4 22.4H21.8" fill="none" stroke="#4a4a4a" stroke-width="3.1" stroke-linecap="round" stroke-linejoin="round" /><path d="M19.6 32.8L28.2 25.4Q29.5 24.4 30.6 25.6L33.1 28.6Q34.1 29.9 32.9 31L24.3 38.4Q23.7 38.9 22.9 38.9H19.6Z" fill="none" stroke="#4a4a4a" stroke-width="3" stroke-linecap="round" stroke-linejoin="round" /></g></svg><span class="t" style="left:959.2px;top:1209px;font-size:27px;letter-spacing:0.63px;-webkit-text-stroke:0.15px;">Fixed lead time</span><span class="t" style="left:1425.9px;top:1209px;font-size:27px;letter-spacing:0.36px;-webkit-text-stroke:0.15px;">(Configure her...able by user)</span><span class="t" style="left:1870.4px;top:1209px;font-size:27px;letter-spacing:0.06px;-webkit-text-stroke:0.15px;">3 days</span><div style="left:2166px;top:1193px;width:220px;height:36px;background:#77c25e;border-radius:6.5px"></div><span class="t" style="left:2241.8px;top:1210px;font-size:22.5px;color:#fff;font-weight:700;letter-spacing:0.18px;-webkit-text-stroke:0.7px;">Active</span><span class="t" style="left:2609.8px;top:1209px;font-size:27px;letter-spacing:0.75px;-webkit-text-stroke:0.15px;">Dec 9, 2024 - 05:56 PM</span><span class="t" style="left:3053.9px;top:1209px;font-size:27px;letter-spacing:0.28px;-webkit-text-stroke:0.15px;">Sunil Gowda</span><div style="left:3490px;top:1178px;width:210px;height:60px;overflow:hidden"><span class="t" style="left:7.1px;top:31px;font-size:27px;letter-spacing:0.97px;-webkit-text-stroke:0.15px;">Dec 9, 2024 - 05:56 PM</span></div><svg class="i" style="left:3743.0px;top:1194.2px" width="6" height="27" viewBox="0 0 6 27" ><circle cx="3" cy="3" r="2.5" fill="#4a4a4a"/><circle cx="3" cy="13.3" r="2.5" fill="#4a4a4a"/><circle cx="3" cy="23.6" r="2.5" fill="#4a4a4a"/></svg></section>
<section><svg class="i" style="left:848.2px;top:1298.3px" width="16" height="24" viewBox="0 0 16 24" ><path d="M2.4 1.9L12.4 12L2.4 22.1" fill="none" stroke="#4a4a4a" stroke-width="4.2" stroke-linecap="butt" stroke-linejoin="miter"/></svg><svg class="i" style="left:902.2px;top:1289.3px" width="36.0" height="43.0" viewBox="0 0 36.0 43.0" ><g transform="scale(1.0)"><path d="M25.8 4.6H29.3a3.8 3.8 0 0 1 3.8 3.8V19.8M9.2 4.6H5.4a3.8 3.8 0 0 0-3.8 3.8V36.4a3.8 3.8 0 0 0 3.8 3.8H15.6" fill="none" stroke="#4a4a4a" stroke-width="3.1" stroke-linecap="round" stroke-linejoin="round" /><rect x="12.2" y="1.55" width="12.1" height="4.9" rx="2.45" fill="none" stroke="#4a4a4a" stroke-width="3.1" stroke-linecap="round" stroke-linejoin="round" /><path d="M10.4 16.7H21.8M10.4 22.4H21.8" fill="none" stroke="#4a4a4a" stroke-width="3.1" stroke-linecap="round" stroke-linejoin="round" /><path d="M19.6 32.8L28.2 25.4Q29.5 24.4 30.6 25.6L33.1 28.6Q34.1 29.9 32.9 31L24.3 38.4Q23.7 38.9 22.9 38.9H19.6Z" fill="none" stroke="#4a4a4a" stroke-width="3" stroke-linecap="round" stroke-linejoin="round" /></g></svg><span class="t" style="left:960.2px;top:1311px;font-size:27px;letter-spacing:0.6px;-webkit-text-stroke:0.15px;">test type latest</span><span class="t" style="left:1426.9px;top:1311px;font-size:27px;letter-spacing:0.6px;-webkit-text-stroke:0.15px;">test type latest</span><span class="t" style="left:1869.7px;top:1311px;font-size:27px;-webkit-text-stroke:0.15px;">-</span><div style="left:2166px;top:1295px;width:220px;height:36px;background:#77c25e;border-radius:6.5px"></div><span class="t" style="left:2241.8px;top:1312px;font-size:22.5px;color:#fff;font-weight:700;letter-spacing:0.18px;-webkit-text-stroke:0.7px;">Active</span><span class="t" style="left:2609.8px;top:1311px;font-size:27px;letter-spacing:0.75px;-webkit-text-stroke:0.15px;">Dec 6, 2024 - 05:46 PM</span><span class="t" style="left:3052.9px;top:1311px;font-size:27px;letter-spacing:0.42px;-webkit-text-stroke:0.15px;">Hitesh Patadia</span><div style="left:3490px;top:1280px;width:210px;height:60px;overflow:hidden"><span class="t" style="left:7.1px;top:31px;font-size:27px;letter-spacing:0.97px;-webkit-text-stroke:0.15px;">Dec 9, 2024 - 05:46 PM</span></div><svg class="i" style="left:3743.0px;top:1296.2px" width="6" height="27" viewBox="0 0 6 27" ><circle cx="3" cy="3" r="2.5" fill="#4a4a4a"/><circle cx="3" cy="13.3" r="2.5" fill="#4a4a4a"/><circle cx="3" cy="23.6" r="2.5" fill="#4a4a4a"/></svg></section>
<div style="left:793px;top:540px;width:2994.5px;height:211px;border:5px solid #e4191b"></div>
</main>
</body></html>
